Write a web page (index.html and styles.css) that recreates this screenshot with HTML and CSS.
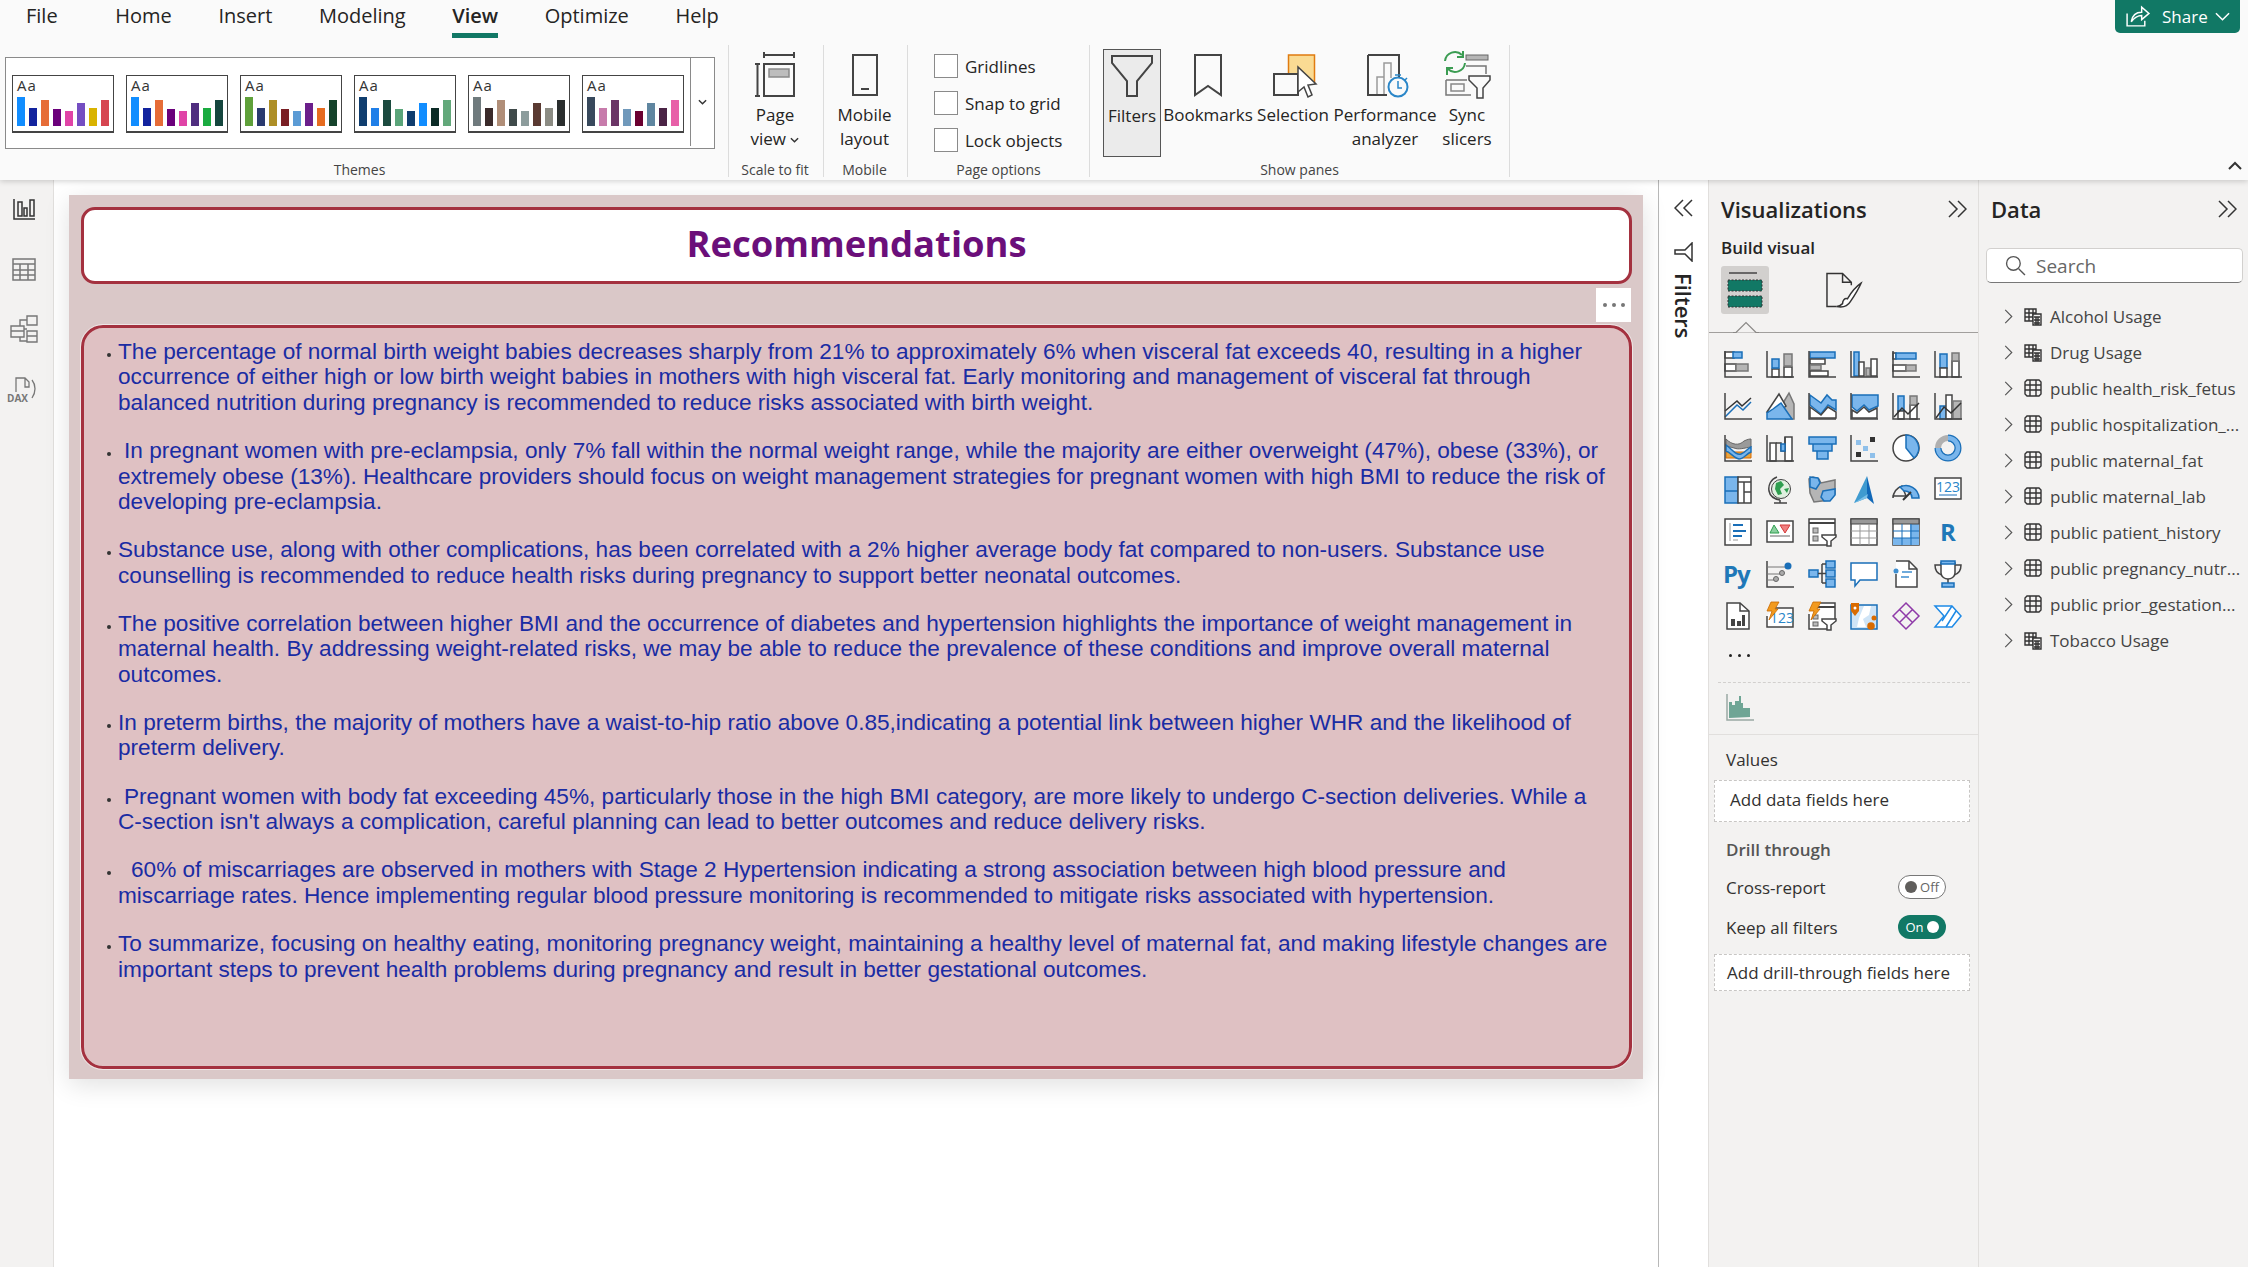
FILE: index.html
```html
<!DOCTYPE html>
<html lang="en">
<head>
<meta charset="utf-8">
<title>Recommendations</title>
<link rel="stylesheet" href="styles.css">
</head>
<body>
<header class="ribbon">
  <nav class="tabs">
    <span class="tab tab-file">File</span><span class="tab">Home</span><span class="tab">Insert</span><span class="tab">Modeling</span><span class="tab tab-on">View</span><span class="tab">Optimize</span><span class="tab">Help</span>
    <span class="share">
      <svg class="share-ic" viewBox="0 0 24 24"><path d="M2 9V21H19V16M6 17C7 11 11 8 16 8V3L23 9L16 15V11C12 11 9 13 6 17Z"/></svg>
      <span>Share</span>
      <svg class="share-ch" viewBox="0 0 16 10"><path d="M1 1L8 8L15 1"/></svg>
    </span>
  </nav>
  <div class="rb-body">
    <section class="grp grp-themes">
      <div class="grp-main">
        <div class="gallery">
          <div class="theme t1"><span class="aa">Aa</span><div class="bars"><i></i><i></i><i></i><i></i><i></i><i></i><i></i><i></i></div></div>
          <div class="theme t2"><span class="aa">Aa</span><div class="bars"><i></i><i></i><i></i><i></i><i></i><i></i><i></i><i></i></div></div>
          <div class="theme t3"><span class="aa">Aa</span><div class="bars"><i></i><i></i><i></i><i></i><i></i><i></i><i></i><i></i></div></div>
          <div class="theme t4"><span class="aa">Aa</span><div class="bars"><i></i><i></i><i></i><i></i><i></i><i></i><i></i><i></i></div></div>
          <div class="theme t5"><span class="aa">Aa</span><div class="bars"><i></i><i></i><i></i><i></i><i></i><i></i><i></i><i></i></div></div>
          <div class="theme t6"><span class="aa">Aa</span><div class="bars"><i></i><i></i><i></i><i></i><i></i><i></i><i></i><i></i></div></div>
          <div class="gal-more"><svg viewBox="0 0 10 6"><path d="M1 1L5 5L9 1"/></svg></div>
        </div>
      </div>
      <div class="grp-label">Themes</div>
    </section>
    <section class="grp grp-scale">
      <div class="grp-main">
        <div class="cmd">
          <svg class="cmd-ic" viewBox="0 0 42 42"><path class="rk" d="M10 1H40M10 -2V4M40 -2V4M10 10H40V42H10ZM1 10H6M1 42H6M3.500 10V42"/><rect x="15" y="15" width="20" height="8" fill="#bdbdbd" stroke="#8a8a8a" stroke-width="1.500"/></svg>
          <span class="cmd-t">Page<br>view <svg class="mini-ch" viewBox="0 0 10 6"><path d="M1 1L5 5L9 1"/></svg></span>
        </div>
      </div>
      <div class="grp-label">Scale to fit</div>
    </section>
    <section class="grp grp-mobile">
      <div class="grp-main">
        <div class="cmd">
          <svg class="cmd-ic" viewBox="0 0 42 42"><path class="rk" d="M9 1H33V41H9ZM17 35H25"/></svg>
          <span class="cmd-t">Mobile<br>layout</span>
        </div>
      </div>
      <div class="grp-label">Mobile</div>
    </section>
    <section class="grp grp-options">
      <div class="grp-main checks">
        <label class="chk"><span class="box"></span>Gridlines</label>
        <label class="chk"><span class="box"></span>Snap to grid</label>
        <label class="chk"><span class="box"></span>Lock objects</label>
      </div>
      <div class="grp-label">Page options</div>
    </section>
    <section class="grp grp-panes">
      <div class="grp-main panes">
        <div class="cmd cmd-filters">
          <svg class="cmd-ic" viewBox="0 0 42 42"><path class="rk" d="M1 1H41V8L26 26V41H16V26L1 8Z"/></svg>
          <span class="cmd-t">Filters</span>
        </div>
        <div class="cmd cmd-book">
          <svg class="cmd-ic" viewBox="0 0 42 42"><path class="rk" d="M8 1H34V41L21 32L8 41Z"/></svg>
          <span class="cmd-t">Bookmarks</span>
        </div>
        <div class="cmd cmd-sel">
          <svg class="cmd-ic ic-wide ic-shift" viewBox="0 0 46 42"><rect x="15.500" y="1" width="26" height="27" fill="#fadb93" stroke="#e07b10" stroke-width="1.500"/><rect x="1" y="20" width="24" height="21" fill="#fafafa" stroke="#444" stroke-width="2"/><path d="M25 13V38L31 33L35 43L39 41L35 31L43 30Z" fill="#fff" stroke="#444" stroke-width="1.500"/></svg>
          <span class="cmd-t">Selection</span>
        </div>
        <div class="cmd cmd-perf">
          <svg class="cmd-ic ic-shift" viewBox="0 0 42 42"><path class="rk" d="M1 1H32V24M1 1V41H20"/><path d="M10 40V23H17V40M17 40V9H24V24" fill="none" stroke="#9a9a9a" stroke-width="1.500"/><circle cx="31" cy="33" r="9.500" fill="#fafafa" stroke="#2a86c8" stroke-width="2"/><path d="M31 27V34H35M28 21H34M40 24L38 26" fill="none" stroke="#2a86c8" stroke-width="1.500"/></svg>
          <span class="cmd-t">Performance<br>analyzer</span>
        </div>
        <div class="cmd cmd-sync">
          <svg class="cmd-ic ic-sync" viewBox="0 3 48 42"><rect x="23" y="4" width="22" height="5" fill="#b5b5b5" stroke="#666"/><path d="M23 15H43V23M3 29V44H28M3 29H24" fill="none" stroke="#777" stroke-width="1.500"/><rect x="8" y="33" width="13" height="7" fill="none" stroke="#888" stroke-width="1.500"/><path d="M26 25H47V29L40 37V47H34V37L26 29Z" fill="#fafafa" stroke="#444" stroke-width="1.500"/><path d="M2 10A10 10 0 0 1 19 4M20 0V6H14M22 12A10 10 0 0 1 5 18M4 24V17H10" fill="none" stroke="#3b9c52" stroke-width="2"/></svg>
          <span class="cmd-t">Sync<br>slicers</span>
        </div>
      </div>
      <div class="grp-label">Show panes</div>
    </section>
    <svg class="rb-collapse" viewBox="0 0 14 9"><path d="M1 8L7 2L13 8"/></svg>
  </div>
</header>

<main class="shell">
  <aside class="rail">
    <svg class="rail-ic" viewBox="0 0 24 24"><path d="M2 2V22H23M6 5H10V19H6ZM12 11H15V19H12ZM18 3H22V19H18Z" fill="none" stroke="#333" stroke-width="1.500"/></svg>
    <svg class="rail-ic" viewBox="0 0 24 24"><path d="M1 2H23V23H1ZM1 7H23M1 13H23M1 18H23M8 7V23M16 7V23" fill="none" stroke="#777" stroke-width="1.500"/></svg>
    <svg class="rail-ic" viewBox="0 0 28 28"><path d="M1 11H14V22H1ZM1 16H14M17 1H27V10H17ZM17 16H27V27H17ZM17 21H27M14 14H17M17 5H10V11M10 22V26H17" fill="none" stroke="#777" stroke-width="1.400"/></svg>
    <div class="rail-dax"><svg viewBox="0 0 28 26"><path d="M8 16V2H17L21 6V11H17V2M21 6V11M24 4C28 9 28 16 24 22" fill="none" stroke="#777" stroke-width="1.300"/></svg><span>DAX</span></div>
  </aside>

  <section class="canvas">
    <article class="page">
      <h1 class="title">Recommendations</h1>
      <div class="more"><i></i><i></i><i></i></div>
      <div class="recs">
        <p class="rec"><span class="dot"></span><span>The percentage of normal birth weight babies decreases sharply from 21% to approximately 6% when visceral fat exceeds 40, resulting in a higher<br>occurrence of either high or low birth weight babies in mothers with high visceral fat. Early monitoring and management of visceral fat through<br>balanced nutrition during pregnancy is recommended to reduce risks associated with birth weight.</span></p>
        <p class="rec"><span class="dot"></span><span><span class="ind"></span>In pregnant women with pre-eclampsia, only 7% fall within the normal weight range, while the majority are either overweight (47%), obese (33%), or<br>extremely obese (13%). Healthcare providers should focus on weight management strategies for pregnant women with high BMI to reduce the risk of<br>developing pre-eclampsia.</span></p>
        <p class="rec"><span class="dot"></span><span>Substance use, along with other complications, has been correlated with a 2% higher average body fat compared to non-users. Substance use<br>counselling is recommended to reduce health risks during pregnancy to support better neonatal outcomes.</span></p>
        <p class="rec"><span class="dot"></span><span>The positive correlation between higher BMI and the occurrence of diabetes and hypertension highlights the importance of weight management in<br>maternal health. By addressing weight-related risks, we may be able to reduce the prevalence of these conditions and improve overall maternal<br>outcomes.</span></p>
        <p class="rec"><span class="dot"></span><span>In preterm births, the majority of mothers have a waist-to-hip ratio above 0.85,indicating a potential link between higher WHR and the likelihood of<br>preterm delivery.</span></p>
        <p class="rec"><span class="dot"></span><span><span class="ind"></span>Pregnant women with body fat exceeding 45%, particularly those in the high BMI category, are more likely to undergo C-section deliveries. While a<br>C-section isn't always a complication, careful planning can lead to better outcomes and reduce delivery risks.</span></p>
        <p class="rec"><span class="dot"></span><span><span class="ind ind2"></span>60% of miscarriages are observed in mothers with Stage 2 Hypertension indicating a strong association between high blood pressure and<br>miscarriage rates. Hence implementing regular blood pressure monitoring is recommended to mitigate risks associated with hypertension.</span></p>
        <p class="rec"><span class="dot"></span><span>To summarize, focusing on healthy eating, monitoring pregnancy weight, maintaining a healthy level of maternal fat, and making lifestyle changes are<br>important steps to prevent health problems during pregnancy and result in better gestational outcomes.</span></p>
      </div>
    </article>
  </section>

  <aside class="strip">
    <svg class="dbl" viewBox="0 0 20 20"><path d="M9 2L1 10L9 18M18 2L10 10L18 18"/></svg>
    <svg class="strip-fn" viewBox="0 0 20 20"><path d="M18 1V19L11 12H1V8H11Z" fill="none" stroke="#333" stroke-width="1.500"/></svg>
    <span class="strip-t">Filters</span>
  </aside>

  <aside class="viz">
    <div class="pane-h"><h2>Visualizations</h2><svg class="dbl" viewBox="0 0 20 20"><path d="M2 2L10 10L2 18M11 2L19 10L11 18"/></svg></div>
    <div class="build">Build visual</div>
    <div class="viz-tabs">
      <span class="vt-on"><svg viewBox="0 0 36 36"><path d="M2 1H30" stroke="#444" stroke-width="1.500"/><rect x="1" y="8" width="34" height="11" fill="#117865" stroke="#333" stroke-dasharray="2 1.500"/><rect x="1" y="24" width="34" height="11" fill="#117865" stroke="#333" stroke-dasharray="2 1.500"/></svg></span>
      <svg class="vt-off" viewBox="0 0 38 36"><path d="M11 35H1V1H17L26 10V13M17 1V10H26" fill="none" stroke="#333" stroke-width="1.500"/><path d="M36 11C30 15 25 22 22 27C19 26 17 29 17 32C15 34 13 35 11 35C16 36 22 35 25 30C29 24 33 18 36 11Z" fill="#fff" stroke="#333" stroke-width="1.500"/></svg>
    </div>
    <div class="notch-line"><svg viewBox="0 0 26 11"><path d="M0 11H3L13 1L23 11H26" fill="#f3f2f1" stroke="#8a8886" stroke-width="1.200"/></svg></div>

    <div class="vz-grid">
      <svg viewBox="0 0 28 28"><path class="fw" d="M1 2H10V8H1ZM1 14H12V21H1Z"/><path class="fb" d="M9 2H18V8H9Z"/><path class="fg" d="M12 14H24V21H12Z"/><path class="ax" d="M1 1V27H28"/></svg>
      <svg viewBox="0 0 28 28"><path class="fw" d="M6 19H13V27H6ZM18 17H26V27H18Z"/><path class="fb" d="M6 9H13V18H6Z"/><path class="fg" d="M18 4H26V16H18Z"/><path class="ax" d="M1 1V27H28"/></svg>
      <svg viewBox="0 0 28 28"><path class="fb" d="M2 2H27V8H2Z"/><path class="fw" d="M2 9H17V14H2Z"/><path class="fg" d="M2 15H13V20H2Z"/><path class="fw" d="M2 21H20V26H2Z"/><path class="ax" d="M1 1V27H28"/></svg>
      <svg viewBox="0 0 28 28"><path class="fb" d="M4 2H9V26H4Z"/><path class="fw" d="M9 12H14V26H9Z"/><path class="fg" d="M16 18H20V26H16Z"/><path class="fw" d="M21 9H27V26H21Z"/><path class="ax" d="M1 1V27H28"/></svg>
      <svg viewBox="0 0 28 28"><path class="fw" d="M1 3H4V9H1ZM1 15H14V21H1Z"/><path class="fb" d="M4 3H24V9H4Z"/><path class="fg" d="M14 15H24V21H14Z"/><path class="ax" d="M1 1V27H28"/></svg>
      <svg viewBox="0 0 28 28"><path class="fb" d="M6 4H13V18H6Z"/><path class="fw" d="M6 18H13V27H6ZM18 11H25V27H18Z"/><path class="fg" d="M18 3H25V11H18Z"/><path class="ax" d="M1 1V27H28"/></svg>

      <svg viewBox="0 0 28 28"><path class="ln" d="M1 19L13 9L18 14L27 6"/><path class="lb" d="M1 26L13 14L19 19L27 11" transform="translate(0 -1)"/><path class="ax" d="M1 1V27H28"/></svg>
      <svg viewBox="0 0 28 28"><path class="fg" d="M14 16L23 1L28 12V27H20Z"/><path class="fw" d="M1 20L13 2L20 14L10 22Z"/><path class="fb" d="M1 27V21L7 17L15 11L26 27Z"/></svg>
      <svg viewBox="0 0 28 28"><path class="fb" d="M2 3L13 11L19 3L24 8H28V18L20 13L13 22L2 13Z"/><path class="fw" d="M2 15L13 23L20 15L28 20V26H2Z"/><path class="ax" d="M1 1V27H28"/></svg>
      <svg viewBox="0 0 28 28"><path class="fb" d="M2 3H28V14L19 18L14 13L7 19L2 15Z"/><path class="fw" d="M2 18L7 21L14 15L19 20L27 16V26H2Z"/><path class="ax" d="M1 1V27H28"/></svg>
      <svg viewBox="0 0 28 28"><path class="fb" d="M6 4H12V19H6Z"/><path class="fw" d="M6 19H12V27H6ZM18 13H25V27H18Z"/><path class="fg" d="M18 4H25V13H18Z"/><path class="ln" d="M2 25L10 16L16 22L27 11"/><path class="ax" d="M1 1V27H28"/></svg>
      <svg viewBox="0 0 28 28"><path class="fb" d="M6 14H12V27H6Z"/><path class="fw" d="M12 3H18V27H12Z"/><path class="fg" d="M19 9H27V27H19Z"/><path class="ln" d="M2 26L10 15L17 21L27 11"/><path class="ax" d="M1 1V27H28"/></svg>

      <svg viewBox="0 0 28 28"><path d="M2 5C8 11 15 12 20 7C24 5 26 5 27 5V13C20 14 15 16 10 14C7 13 4 13 2 12Z" fill="#9a9a9a" stroke="#666"/><path d="M2 18H27V24H2Z" fill="#e8a33d" stroke="#d96b00"/><path class="fb" d="M2 11C8 15 12 22 17 20C22 18 24 14 27 13V18C22 20 20 25 15 25C10 24 6 18 2 17Z"/><path class="ax" d="M1 1V27H28"/></svg>
      <svg viewBox="0 0 28 28"><path class="fw" d="M4 9H10V27H4ZM19 3H26V27H19Z"/><path d="M10 9H15V17H19V3" fill="none" stroke="#444" stroke-width="1.500"/><path class="fb" d="M15 10H19V17H15Z"/><path class="ax" d="M1 1V27H28"/></svg>
      <svg viewBox="0 0 28 28"><path class="fb" d="M1 3H28V10H1ZM5 10H24V17H5ZM9 17H20V25H9Z"/></svg>
      <svg viewBox="0 0 28 28"><path class="ax" d="M1 1V27H28"/><rect x="6" y="6" width="5" height="5" fill="#8fc0ea"/><rect x="13" y="12" width="5" height="5" fill="#8fc0ea"/><rect x="20" y="19" width="5" height="5" fill="#8fc0ea"/><rect x="20" y="3" width="5" height="5" fill="#333"/><rect x="6" y="18" width="5" height="5" fill="#333"/></svg>
      <svg viewBox="0 0 28 28"><circle cx="14" cy="14" r="13" fill="#fff" stroke="#444" stroke-width="1.500"/><path class="fb" d="M14 1A13 13 0 0 1 22 24L14 14Z"/></svg>
      <svg viewBox="0 0 28 28"><circle cx="14" cy="14" r="10" fill="none" stroke="#b0b0b0" stroke-width="6"/><path d="M14 4A10 10 0 1 1 4 14" fill="none" stroke="#1a6fb8" stroke-width="7"/><path d="M14 4A10 10 0 1 1 4 14" fill="none" stroke="#7ab6ec" stroke-width="4.500"/></svg>

      <svg viewBox="0 0 28 28"><path class="fb" d="M1 1H14V15H1ZM1 15H14V27H1Z"/><path class="fw" d="M14 1H27V6H14ZM14 6H20V27H14ZM20 6H27V16H20ZM20 16H27V27H20Z"/></svg>
      <svg viewBox="0 0 28 28"><circle cx="15" cy="13" r="9.500" fill="#dff0df" stroke="#444" stroke-width="1"/><path d="M10 7L15 5L18 9L14 13L16 18L12 19L9 13ZM18 13L23 12L21 17Z" fill="#2f9e4f"/><path d="M11 1C5 3 2 9 3 15C4 20 8 23 14 24M14 24V27M8 27H21" fill="none" stroke="#444" stroke-width="1.500"/></svg>
      <svg viewBox="0 0 28 28"><path class="fg" d="M1 3L5 1L11 3L13 7L22 5L27 4V18L22 24L14 25L6 26L2 17Z"/><path class="fb" d="M2 1L10 2L12 7L8 13L2 11ZM15 15L27 13V19L22 25H16L13 21Z"/></svg>
      <svg viewBox="0 0 28 28"><path d="M17 0L4 27L17 22Z" fill="#3f9bd0"/><path d="M17 0L17 22L24 28Z" fill="#1168b8"/><path d="M4 27L17 22L18 18Z" fill="#7bc0e8"/></svg>
      <svg viewBox="0 0 28 28"><path d="M1 22A13 13 0 0 1 10 10L14 20H1Z" fill="none" stroke="#444" stroke-width="1.500"/><path class="fb" d="M8 11A13 13 0 0 1 27 22H20A7 7 0 0 0 12 15Z"/><path d="M11 24L19 16" stroke="#333" stroke-width="2"/></svg>
      <svg viewBox="0 0 28 28"><rect x="1" y="2" width="26" height="21" fill="#fff" stroke="#444" stroke-width="1.500"/><text x="14" y="16" class="n123">123</text><path d="M5 19H23" stroke="#1a6fb8"/></svg>

      <svg viewBox="0 0 28 28"><rect x="1" y="1" width="26" height="26" fill="#fff" stroke="#444" stroke-width="1.500"/><path d="M6 5V23" stroke="#999"/><path d="M9 7H19M9 13H22M9 18H18" stroke="#1a6fb8" stroke-width="2"/><path d="M9 22H14" stroke="#999"/></svg>
      <svg viewBox="0 0 28 28"><rect x="1" y="3" width="26" height="21" fill="#fff" stroke="#444" stroke-width="1.500"/><path d="M4 15L8 7L13 15Z" fill="#8bcf9f" stroke="#2f9e4f"/><path d="M14 7H24L19 15Z" fill="#f08080" stroke="#d43a3a"/><path d="M4 18H24" stroke="#999" stroke-width="1.500"/></svg>
      <svg viewBox="0 0 28 28"><path class="fw" d="M1 1H27V18H20V27H1Z"/><path d="M1 5H27" stroke="#444" stroke-width="2"/><rect x="5" y="10" width="5" height="5" fill="#bbb" stroke="#666"/><rect x="5" y="18" width="5" height="5" fill="#bbb" stroke="#666"/><path class="fw" d="M14 17H28V19L23 23V28H19V23L14 19Z"/></svg>
      <svg viewBox="0 0 28 28"><rect x="1" y="1" width="26" height="26" fill="#fff" stroke="#444" stroke-width="1.500"/><rect x="1" y="1" width="26" height="5" fill="#999" stroke="#444"/><path d="M1 13H27M1 20H27M10 6V27M19 6V27" stroke="#999"/></svg>
      <svg viewBox="0 0 28 28"><rect x="1" y="1" width="26" height="26" fill="#fff" stroke="#444" stroke-width="1.500"/><rect x="18" y="6" width="9" height="21" fill="#7ab6ec"/><rect x="1" y="20" width="26" height="7" fill="#7ab6ec"/><rect x="1" y="1" width="26" height="5" fill="#999" stroke="#444"/><path d="M1 13H27M1 20H27M10 6V27M19 6V27" stroke="#1a6fb8"/></svg>
      <span class="vz-r">R</span>

      <span class="vz-py">Py</span>
      <svg viewBox="0 0 28 28"><path class="ax" d="M1 1V27H28"/><path d="M1 7H21M1 14H14M1 20H8" stroke="#777"/><circle cx="22" cy="6" r="3.500" fill="#1a6fb8"/><circle cx="16" cy="13" r="2.500" fill="#aaa" stroke="#666"/><circle cx="10" cy="19" r="2.500" fill="#aaa" stroke="#666"/></svg>
      <svg viewBox="0 0 28 28"><path class="fb" d="M1 10H10V17H1ZM18 1H27V8H18ZM18 10H27V17H18ZM18 19H27V27H18Z"/><path d="M10 13.500H18M14 4V23M14 4H18M14 23H18" fill="none" stroke="#444" stroke-width="1.500"/></svg>
      <svg viewBox="0 0 28 28"><path d="M1 3H27V20H10L5 26V20H1Z" fill="#fff" stroke="#1a6fb8" stroke-width="1.500"/></svg>
      <svg viewBox="0 0 28 28"><path d="M4 1H17L25 9V27H4V14" fill="#fff" stroke="#444" stroke-width="1.500"/><path d="M17 1V9H25" fill="none" stroke="#444" stroke-width="1.500"/><circle cx="4" cy="11" r="2.500" fill="#3f8fd0"/><path d="M10 12H20M9 17H17" stroke="#3f8fd0" stroke-width="1.500"/></svg>
      <svg viewBox="0 0 28 28"><path class="fw" d="M7 3H21V13C21 17 17 19 14 19C11 19 7 17 7 13Z"/><path d="M7 5H1C1 11 4 14 8 15M21 5H27C27 11 24 14 20 15M14 19V23" fill="none" stroke="#444" stroke-width="1.500"/><path class="fb" d="M7 1H21V4H7ZM8 23H20V27H8Z"/></svg>

      <svg viewBox="0 0 28 28"><path d="M3 1H16L25 9V27H3Z" fill="#fff" stroke="#444" stroke-width="1.500"/><path d="M16 1V9H25" fill="none" stroke="#444" stroke-width="1.500"/><path d="M7 17H11V24H7ZM13 19H17V24H13ZM18 13H21V24H18Z" fill="#444"/></svg>
      <svg viewBox="0 0 28 28"><path d="M8 6H27V25H1V14" fill="#fff" stroke="#444" stroke-width="1.500"/><text x="16" y="21" class="n123">123</text><path d="M5 0H13L9 7H12L3 18L6 9H1Z" fill="#f29a1f" stroke="#c96a00" stroke-width=".8"/></svg>
      <svg viewBox="0 0 28 28"><path class="fw" d="M8 1H27V18H20V27H1V12"/><path d="M8 5H27" stroke="#444" stroke-width="2"/><rect x="5" y="13" width="5" height="4" fill="#bbb" stroke="#666"/><rect x="5" y="20" width="5" height="4" fill="#bbb" stroke="#666"/><path class="fw" d="M14 17H28V19L23 23V28H19V23L14 19Z"/><path d="M5 0H13L9 7H12L3 18L6 9H1Z" fill="#f29a1f" stroke="#c96a00" stroke-width=".8"/></svg>
      <svg viewBox="0 0 28 28"><path d="M1 3H27V27H1Z" fill="#cfe4f6" stroke="#1a6fb8" stroke-width="1.500"/><path d="M14 4H21L19 13L13 17L16 25H7L9 16Z" fill="#fff"/><path d="M1 1H9V9L5 14L1 9Z" fill="#d96b00"/><circle cx="5" cy="6" r="1.500" fill="#fff"/><circle cx="24" cy="16" r="2.500" fill="#d96b00"/><circle cx="21" cy="24" r="3.800" fill="#d96b00"/></svg>
      <svg viewBox="0 0 28 28"><path d="M14 1L27 14L14 27L1 14Z M8 8L21 21M20 8L7 21" fill="none" stroke="#8e3aa8" stroke-width="1.500"/></svg>
      <svg viewBox="0 0 28 28"><path d="M1 4H18L27 14L18 25H1L10 14Z" fill="#fff" stroke="#1e8ae6" stroke-width="1.500"/><path d="M18 4L8 19M22 9L12 25" stroke="#1e8ae6" stroke-width="1.500"/></svg>
    </div>
    <div class="vz-dots"><i></i><i></i><i></i></div>
    <div class="dash"></div>
    <svg class="vz-custom" viewBox="0 0 28 28"><path d="M3 25V9H6V12H9V8H13V3H15V10H17V15H24V24Z" fill="#6fa595"/><path d="M1 1V27H28" fill="none" stroke="#9aa9a4" stroke-width="1.500"/></svg>
    <div class="wells">
      <div class="w-label">Values</div>
      <div class="well well-a">Add data fields here</div>
      <div class="w-head">Drill through</div>
      <div class="tg-row"><span>Cross-report</span><span class="tg tg-off"><i></i>Off</span></div>
      <div class="tg-row"><span>Keep all filters</span><span class="tg tg-on">On<i></i></span></div>
      <div class="well well-b">Add drill-through fields here</div>
    </div>
  </aside>

  <aside class="data">
    <div class="pane-h"><h2>Data</h2><svg class="dbl" viewBox="0 0 20 20"><path d="M2 2L10 10L2 18M11 2L19 10L11 18"/></svg></div>
    <div class="search"><svg viewBox="0 0 20 20"><circle cx="8" cy="8" r="6.500"/><path d="M13 13L19 19"/></svg><span>Search</span></div>
    <ul class="tree">
      <li><svg class="tw" viewBox="0 0 9 16"><path d="M1 1L8 8L1 15"/></svg><svg class="tb" viewBox="0 0 18 20"><path d="M1 3H12V15H1ZM1 7H12M1 11H12M5 3V15M9 3V15"/><path class="tc" d="M9 8H17V19H9ZM10 11H16M10 14H16M10 17H16M12 11V19M14 11V19"/></svg><span>Alcohol Usage</span></li>
      <li><svg class="tw" viewBox="0 0 9 16"><path d="M1 1L8 8L1 15"/></svg><svg class="tb" viewBox="0 0 18 20"><path d="M1 3H12V15H1ZM1 7H12M1 11H12M5 3V15M9 3V15"/><path class="tc" d="M9 8H17V19H9ZM10 11H16M10 14H16M10 17H16M12 11V19M14 11V19"/></svg><span>Drug Usage</span></li>
      <li><svg class="tw" viewBox="0 0 9 16"><path d="M1 1L8 8L1 15"/></svg><svg class="tb" viewBox="0 0 18 20"><path d="M3 2H15L17 4V16L15 18H3L1 16V4ZM1 7H17M1 12H17M6 2V18M12 2V18"/></svg><span>public health_risk_fetus</span></li>
      <li><svg class="tw" viewBox="0 0 9 16"><path d="M1 1L8 8L1 15"/></svg><svg class="tb" viewBox="0 0 18 20"><path d="M3 2H15L17 4V16L15 18H3L1 16V4ZM1 7H17M1 12H17M6 2V18M12 2V18"/></svg><span>public hospitalization_...</span></li>
      <li><svg class="tw" viewBox="0 0 9 16"><path d="M1 1L8 8L1 15"/></svg><svg class="tb" viewBox="0 0 18 20"><path d="M3 2H15L17 4V16L15 18H3L1 16V4ZM1 7H17M1 12H17M6 2V18M12 2V18"/></svg><span>public maternal_fat</span></li>
      <li><svg class="tw" viewBox="0 0 9 16"><path d="M1 1L8 8L1 15"/></svg><svg class="tb" viewBox="0 0 18 20"><path d="M3 2H15L17 4V16L15 18H3L1 16V4ZM1 7H17M1 12H17M6 2V18M12 2V18"/></svg><span>public maternal_lab</span></li>
      <li><svg class="tw" viewBox="0 0 9 16"><path d="M1 1L8 8L1 15"/></svg><svg class="tb" viewBox="0 0 18 20"><path d="M3 2H15L17 4V16L15 18H3L1 16V4ZM1 7H17M1 12H17M6 2V18M12 2V18"/></svg><span>public patient_history</span></li>
      <li><svg class="tw" viewBox="0 0 9 16"><path d="M1 1L8 8L1 15"/></svg><svg class="tb" viewBox="0 0 18 20"><path d="M3 2H15L17 4V16L15 18H3L1 16V4ZM1 7H17M1 12H17M6 2V18M12 2V18"/></svg><span>public pregnancy_nutr...</span></li>
      <li><svg class="tw" viewBox="0 0 9 16"><path d="M1 1L8 8L1 15"/></svg><svg class="tb" viewBox="0 0 18 20"><path d="M3 2H15L17 4V16L15 18H3L1 16V4ZM1 7H17M1 12H17M6 2V18M12 2V18"/></svg><span>public prior_gestation...</span></li>
      <li><svg class="tw" viewBox="0 0 9 16"><path d="M1 1L8 8L1 15"/></svg><svg class="tb" viewBox="0 0 18 20"><path d="M1 3H12V15H1ZM1 7H12M1 11H12M5 3V15M9 3V15"/><path class="tc" d="M9 8H17V19H9ZM10 11H16M10 14H16M10 17H16M12 11V19M14 11V19"/></svg><span>Tobacco Usage</span></li>
    </ul>
  </aside>
</main>
</body>
</html>
```

FILE: styles.css
```css
* { box-sizing: border-box; }
html, body { margin: 0; height: 100%; overflow: hidden; }
body {
  width: 2248px; height: 1267px; display: flex; flex-direction: column;
  font-family: "Open Sans", "Noto Sans", sans-serif; color: #252423; background: #fff;
}
h1, h2, p, ul { margin: 0; padding: 0; }

/* Ribbon */
.ribbon {
  height: 180px; flex: none; background: #fafafa; position: relative; z-index: 2;
  box-shadow: 0 1px 6px rgba(0,0,0,.2);
}
.tabs { height: 45px; display: flex; gap: 46.6px; padding-left: 26px; font-size: 20px; }
.tab { height: 38px; line-height: 31px; position: relative; white-space: nowrap; }
.tab-file { margin-right: 11px; }
.tab-on { font-weight: 600; border-bottom: 5px solid #117865; }
.share {
  margin-left: auto; margin-right: 8px; width: 125px; height: 33px; background: #117865; color: #fff;
  border-radius: 0 0 5px 5px; display: flex; align-items: center; padding-left: 9px; font-size: 17px;
}
.share-ic { width: 27px; height: 25px; margin-right: 11px; fill: none; stroke: #fff; stroke-width: 1.4; }
.share-ch { width: 15px; height: 10px; margin-left: 7px; fill: none; stroke: #fff; stroke-width: 1.6; }
.rb-body { display: flex; height: 132px; position: relative; }
.rb-collapse { position: absolute; right: 6px; top: 116px; width: 14px; height: 9px; fill: none; stroke: #333; stroke-width: 2; }
.grp { display: flex; flex-direction: column; height: 132px; border-right: 1px solid #dcdcdc; flex: none; }
.grp-main { flex: 1; min-height: 0; display: flex; }
.grp-label { height: 16px; line-height: 18px; text-align: center; font-size: 14px; color: #444; white-space: nowrap; }
.grp-themes { width: 729px; padding: 0 14px 0 5px; }
.grp-scale { width: 95px; padding-right: 2px; }
.grp-mobile { width: 84px; padding-right: 2px; }
.grp-options { width: 182px; }
.grp-panes { width: 420px; }

.gallery {
  margin-top: 12px; width: 710px; height: 92px; flex: none; background: #fff; border: 1px solid #8a8a8a;
  display: flex; gap: 12px; padding: 17px 0 0 6px; position: relative;
}
.theme {
  width: 102px; height: 58px; flex: none; border: 1.5px solid #444; border-bottom-width: 2px; background: #fff;
  padding: 0 0 0 4px; position: relative;
}
.aa { display: block; font-size: 15px; line-height: 19px; height: 19px; color: #333; letter-spacing: 1px; }
.bars { position: absolute; left: 4px; bottom: 5px; display: flex; align-items: flex-end; gap: 4px; height: 29px; }
.bars i { display: block; width: 8px; box-shadow: 0 0 0 1px rgba(255,255,255,.3); }
.bars i:nth-child(1) { height: 29px; background: var(--a); }
.bars i:nth-child(2) { height: 18px; background: var(--b); }
.bars i:nth-child(3) { height: 26px; background: var(--c); }
.bars i:nth-child(4) { height: 17px; background: var(--d); }
.bars i:nth-child(5) { height: 15px; background: var(--e); }
.bars i:nth-child(6) { height: 23px; background: var(--f); }
.bars i:nth-child(7) { height: 18px; background: var(--g); }
.bars i:nth-child(8) { height: 26px; background: var(--h); }
.t1 { --a:#118dff; --b:#12239e; --c:#e66c37; --d:#6b007b; --e:#e044a7; --f:#744ec2; --g:#d9b300; --h:#d64550; }
.t2 { --a:#118dff; --b:#12239e; --c:#e66c37; --d:#6b007b; --e:#e044a7; --f:#4f2d7f; --g:#1aab40; --h:#15463e; }
.t3 { --a:#5fa03a; --b:#2a3a6e; --c:#ae8f26; --d:#7a1f24; --e:#5b9bd5; --f:#6b1f8b; --g:#e66c20; --h:#15432b; }
.t4 { --a:#0f3d6e; --b:#1f7fe8; --c:#1b4a3f; --d:#5aa57a; --e:#0f3d6e; --f:#118dff; --g:#0b2b26; --h:#62a87a; }
.t5 { --a:#6f7a7d; --b:#3a2a2a; --c:#b08e78; --d:#3f4a4a; --e:#8c9c9c; --f:#5a3a32; --g:#8c8c84; --h:#2a2e2e; }
.t6 { --a:#38495c; --b:#c77bab; --c:#6b3566; --d:#7099bb; --e:#6b0030; --f:#5f86a0; --g:#4a2345; --h:#e860a8; }
.gal-more {
  position: absolute; right: 0; top: 0; bottom: 2px; width: 24px; border-left: 1px solid #8a8a8a;
  display: flex; align-items: center; justify-content: center;
}
.gal-more svg { width: 9px; height: 6px; fill: none; stroke: #333; stroke-width: 1.6; }

.cmd { display: flex; flex-direction: column; align-items: center; width: 100%; padding-top: 9px; flex: none; }
.cmd-ic { width: 42px; height: 42px; flex: none; overflow: visible; }
.ic-wide { width: 46px; }
.ic-sync { width: 48px; }
.ic-shift { margin-left: 6px; }
.rk { fill: none; stroke: #444; stroke-width: 2; }
.cmd-t { margin-top: 7px; font-size: 17px; line-height: 24px; text-align: center; white-space: nowrap; }
.mini-ch { width: 9px; height: 6px; fill: none; stroke: #333; stroke-width: 1.6; vertical-align: 2px; }

.checks { flex-direction: column; padding: 9px 0 0 26px; gap: 13px; }
.chk { display: flex; align-items: center; gap: 7px; height: 24px; font-size: 17px; white-space: nowrap; }
.box { width: 24px; height: 24px; border: 1px solid #8a8a8a; background: #fff; flex: none; }

.panes { padding-left: 13px; }
.panes .cmd { width: auto; }
.panes .cmd-filters { width: 58px; height: 108px; margin-top: 4px; padding-top: 5px; background: #ebebeb; border: 1px solid #555; }
.panes .cmd-book { width: 94px; }
.panes .cmd-sel { width: 76px; }
.panes .cmd-perf { width: 108px; }
.panes .cmd-sync { width: 56px; }

/* Main */
.shell { flex: 1; min-height: 0; display: flex; }
.rail {
  width: 54px; flex: none; background: #f3f2f1; border-right: 1px solid #e1dfdd;
  display: flex; flex-direction: column; align-items: center; padding: 17px 6px 0 0; gap: 36px;
}
.rail-ic { width: 24px; height: 24px; flex: none; }
.rail-ic:nth-child(3) { width: 28px; height: 28px; margin-top: -2px; }
.rail-dax { width: 28px; height: 28px; position: relative; margin: -3px 0 0 -3px; }
.rail-dax svg { width: 28px; height: 26px; }
.rail-dax span { position: absolute; left: -1px; bottom: 0; font-size: 10px; font-weight: 700; color: #777; line-height: 11px; background: #f3f2f1; }

.canvas { width: 1604px; flex: none; background: #fff; padding: 15px 0 0 15px; }
.page {
  width: 1574px; height: 884px; background: #dac8c8; padding: 12px 11px 0 12px;
  box-shadow: 0 6px 24px rgba(0,0,0,.12); position: relative;
}
.title {
  height: 77px; background: #fff; border: 3px solid #a4313f; border-radius: 14px;
  text-align: center; font-size: 36.4px; line-height: 66px; font-weight: 700; color: #6b0f7a;
  margin-bottom: 41px;
}
.more {
  position: absolute; left: 1527px; top: 93px; width: 35px; height: 34px; background: #fff;
  display: flex; align-items: center; justify-content: center; gap: 5px;
}
.more i { width: 4px; height: 4px; border-radius: 50%; background: #777; }
.recs {
  height: 744px; background: #dfc1c3; border: 3px solid #a4313f; border-radius: 22px;
  outline: 1px solid rgba(255,255,255,.55); padding: 11px 0 0 23px;
  font-family: "Liberation Sans", Arial, sans-serif; font-size: 22.62px; line-height: 25.4px; color: #1a2ca3;
}
.rec { display: flex; gap: 7px; white-space: nowrap; margin-bottom: 22.9px; }
.dot { width: 4px; height: 4px; border-radius: 50%; background: #333; flex: none; margin-top: 14px; }
.ind { display: inline-block; width: 6px; }
.ind2 { width: 13px; }

.strip { width: 50px; flex: none; background: #fff; border-left: 1px solid #b8b8b8; display: flex; flex-direction: column; align-items: center; padding-top: 18px; }
.dbl { width: 20px; height: 20px; fill: none; stroke: #333; stroke-width: 1.5; flex: none; }
.strip-fn { width: 20px; height: 20px; margin-top: 24px; }
.strip-t { writing-mode: vertical-rl; font-size: 22px; font-weight: 600; line-height: 24px; margin-top: 11px; color: #252423; }

.viz { width: 271px; flex: none; background: #f3f2f1; border-left: 1px solid #e1dfdd; border-right: 1px solid #e1dfdd; }
.pane-h { display: flex; justify-content: space-between; align-items: center; height: 30px; margin-top: 14px; padding: 0 11px 0 12px; }
.pane-h h2 { font-size: 22px; font-weight: 600; line-height: 30px; }
.build { margin: 13px 0 0 12px; font-size: 17px; font-weight: 600; line-height: 22px; }
.viz-tabs { display: flex; margin: 7px 0 0 12px; align-items: center; height: 48px; }
.vt-on { width: 48px; height: 48px; background: #d2d0ce; border-radius: 3px; display: flex; align-items: center; justify-content: center; }
.vt-on svg { width: 36px; height: 36px; }
.vt-off { width: 37px; height: 36px; margin-left: 57px; }
.notch-line { height: 19px; border-bottom: 1.5px solid #a19f9d; position: relative; }
.notch-line svg { position: absolute; left: 24px; bottom: -1px; width: 26px; height: 12px; }

.vz-grid { display: grid; grid-template-columns: repeat(6, 28px); grid-auto-rows: 28px; gap: 14px; padding: 17px 0 0 15px; }
.vz-grid svg { width: 28px; height: 28px; display: block; overflow: visible; }
.ax { fill: none; stroke: #444; stroke-width: 1.500; }
.fw { fill: #fff; stroke: #444; stroke-width: 1.500; }
.fb { fill: #7ab6ec; stroke: #1a6fb8; stroke-width: 1.500; }
.fg { fill: #b5b5b5; stroke: #777; stroke-width: 1.500; }
.ln { fill: none; stroke: #333; stroke-width: 1.500; }
.lb { fill: none; stroke: #1a6fb8; stroke-width: 1.500; }
.n123 { font-family: "Open Sans", sans-serif; font-size: 14px; fill: #2a86c8; text-anchor: middle; }
.vz-r { font-family: "Open Sans", sans-serif; font-weight: 700; font-size: 24px; line-height: 28px; text-align: center; color: #1f78b8; }
.vz-py { font-family: "Open Sans", sans-serif; font-weight: 700; font-size: 24px; line-height: 28px; color: #1f78b8; margin-left: -1px; letter-spacing: -1px; }
.vz-dots { display: flex; gap: 6px; padding: 12px 0 0 20px; height: 38px; align-items: center; }
.vz-dots i { width: 3px; height: 3px; border-radius: 50%; background: #222; }
.dash { margin: 14px 8px 0 9px; border-top: 1px dashed #d2d0ce; }
.vz-custom { display: block; width: 28px; height: 28px; margin: 10px 0 0 17px; }
.wells { margin-top: 13px; border-top: 1.5px solid #e1dfdd; padding: 14px 8px 0 5px; font-size: 17px; color: #323130; }
.w-label { margin-left: 12px; line-height: 22px; }
.well { background: #fff; border: 1px dashed #c8c6c4; white-space: nowrap; }
.well-a { height: 42px; line-height: 38px; padding-left: 15px; margin-top: 9px; }
.well-b { height: 37px; line-height: 35px; padding-left: 12px; margin-top: 15px; }
.w-head { margin: 17px 0 0 12px; font-weight: 600; line-height: 22px; color: #555; }
.tg-row { display: flex; align-items: center; justify-content: space-between; height: 24px; margin: 16px 24px 0 12px; }
.w-head + .tg-row { margin-top: 14px; }
.tg { width: 48px; height: 24px; border-radius: 12px; display: flex; align-items: center; justify-content: center; gap: 3px; font-size: 13px; }
.tg i { width: 12px; height: 12px; border-radius: 50%; }
.tg-off { background: #fff; border: 1px solid #777; color: #666; }
.tg-off i { background: #605e5c; }
.tg-on { background: #117865; color: #fff; }
.tg-on i { background: #fff; }

.data { flex: 1; min-width: 0; background: #f3f2f1; }
.search {
  margin: 24px 5px 0 7px; height: 35px; background: #fff; border: 1px solid #d2d0ce; border-bottom-color: #777;
  border-radius: 5px; display: flex; align-items: center; padding-left: 18px; gap: 10px; color: #666; font-size: 19px;
}
.search svg { width: 21px; height: 21px; fill: none; stroke: #555; stroke-width: 1.300; }
.tree { list-style: none; margin-top: 15px; }
.tree li { height: 36px; display: flex; align-items: center; padding-left: 25px; font-size: 17px; color: #444; }
.tw { width: 9px; height: 15px; flex: none; fill: none; stroke: #555; stroke-width: 1.200; margin-right: 11px; }
.tb { width: 18px; height: 20px; flex: none; fill: none; stroke: #333; stroke-width: 1.400; margin-right: 8px; }
.tc { fill: #f3f2f1; }
.tree span { white-space: nowrap; }
```
